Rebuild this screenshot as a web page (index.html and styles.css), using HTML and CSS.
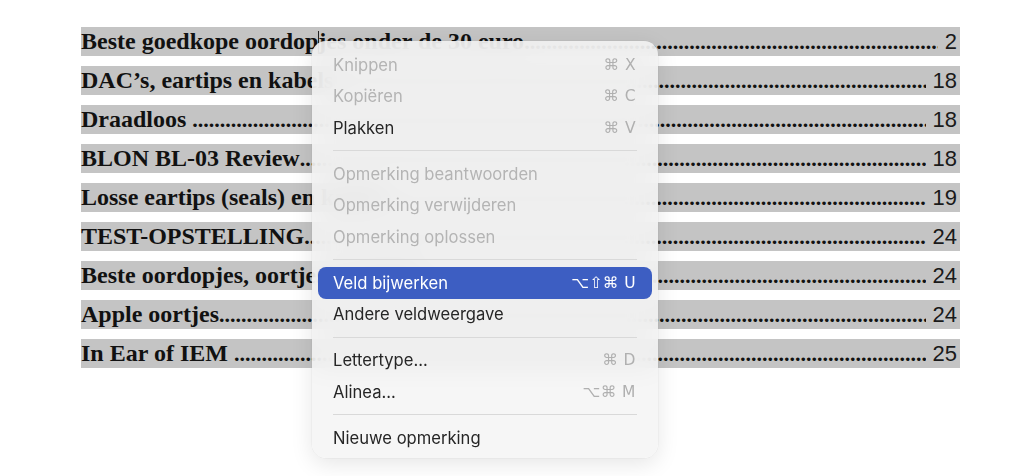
FILE: index.html
```html
<!DOCTYPE html>
<html lang="nl">
<head>
<meta charset="utf-8">
<title>Inhoudsopgave</title>
<link rel="stylesheet" href="styles.css">
</head>
<body>
<div class="page">
  <div class="toc">
    <div class="row"><span class="title">Beste goedkope oordop<span class="caret"></span>jes onder de 30 euro</span><span class="dots">................................................................................................................................................................................................................</span><span class="num">2</span></div>
    <div class="row"><span class="title">DAC’s, eartips en kabels </span><span class="dots">................................................................................................................................................................................................................</span><span class="num">18</span></div>
    <div class="row"><span class="title">Draadloos </span><span class="dots">................................................................................................................................................................................................................</span><span class="num">18</span></div>
    <div class="row"><span class="title">BLON BL-03 Review</span><span class="dots">................................................................................................................................................................................................................</span><span class="num">18</span></div>
    <div class="row"><span class="title">Losse eartips (seals) en kabels </span><span class="dots">................................................................................................................................................................................................................</span><span class="num">19</span></div>
    <div class="row"><span class="title">TEST-OPSTELLING</span><span class="dots">................................................................................................................................................................................................................</span><span class="num">24</span></div>
    <div class="row"><span class="title">Beste oordopjes, oortjes en IEM’s </span><span class="dots">................................................................................................................................................................................................................</span><span class="num">24</span></div>
    <div class="row"><span class="title">Apple oortjes</span><span class="dots">................................................................................................................................................................................................................</span><span class="num">24</span></div>
    <div class="row"><span class="title">In Ear of IEM </span><span class="dots">................................................................................................................................................................................................................</span><span class="num">25</span></div>
  </div>

  <div class="menu">
    <div class="item disabled"><span>Knippen</span><span class="key">⌘ X</span></div>
    <div class="item disabled"><span>Kopiëren</span><span class="key">⌘ C</span></div>
    <div class="item"><span>Plakken</span><span class="key">⌘ V</span></div>
    <div class="sep"></div>
    <div class="item disabled"><span>Opmerking beantwoorden</span></div>
    <div class="item disabled"><span>Opmerking verwijderen</span></div>
    <div class="item disabled"><span>Opmerking oplossen</span></div>
    <div class="sep"></div>
    <div class="item active"><span>Veld bijwerken</span><span class="key">⌥⇧⌘ U</span></div>
    <div class="item"><span>Andere veldweergave</span></div>
    <div class="sep"></div>
    <div class="item"><span>Lettertype...</span><span class="key">⌘ D</span></div>
    <div class="item"><span>Alinea...</span><span class="key">⌥⌘ M</span></div>
    <div class="sep"></div>
    <div class="item"><span>Nieuwe opmerking</span></div>
  </div>
</div>
</body>
</html>
```

FILE: styles.css
```css
html, body {
  margin: 0;
  padding: 0;
  background: #ffffff;
}

.page {
  position: relative;
  width: 1014px;
  height: 476px;
  overflow: hidden;
}

.toc {
  padding: 27px 54px 0 81px;
  display: flex;
  flex-direction: column;
  gap: 10px;
}

.row {
  display: flex;
  align-items: center;
  height: 29px;
  background: #c4c4c4;
  font-family: "Liberation Serif", "Times New Roman", serif;
  font-weight: bold;
  font-size: 24px;
  line-height: 29px;
  color: #111;
  white-space: pre;
}

.title {
  flex: none;
}

.dots {
  flex: 1;
  min-width: 0;
  overflow: hidden;
  font-size: 22px;
}

.num {
  flex: none;
  font-family: "Liberation Sans", Arial, sans-serif;
  font-weight: normal;
  font-size: 22px;
  color: #1a1a1a;
  padding-left: 7px;
  padding-right: 3px;
}

.caret {
  display: inline-block;
  width: 1px;
  height: 21px;
  background: #222;
  vertical-align: -3px;
  margin: 0 -0.5px;
}

.menu {
  position: absolute;
  left: 312px;
  top: 41px;
  width: 346px;
  height: 417px;
  box-sizing: border-box;
  padding: 8px 6px 5px;
  border-radius: 14px;
  background: rgba(244, 244, 244, 0.86);
  backdrop-filter: blur(14px);
  -webkit-backdrop-filter: blur(14px);
  box-shadow: 0 6px 22px rgba(0, 0, 0, 0.10), 0 0 0 0.5px rgba(0, 0, 0, 0.06);
  font-family: Inter, "Noto Sans", "DejaVu Sans", sans-serif;
  font-size: 16.6px;
  color: #262626;
}

.item {
  display: flex;
  justify-content: space-between;
  align-items: center;
  height: 31.5px;
  padding: 0 16px 0 15px;
  border-radius: 8px;
}

.item.disabled {
  color: #b4b4b4;
}

.key {
  color: #b0b0b0;
  font-family: "DejaVu Sans", Inter, sans-serif;
  font-size: 15.5px;
  letter-spacing: 0.5px;
}

.item.active {
  background: #3d5ec2;
  color: #ffffff;
}

.item.active .key {
  color: #ffffff;
}

.sep {
  height: 1px;
  margin: 6.75px 15px;
  background: #d9d9d9;
}
```
